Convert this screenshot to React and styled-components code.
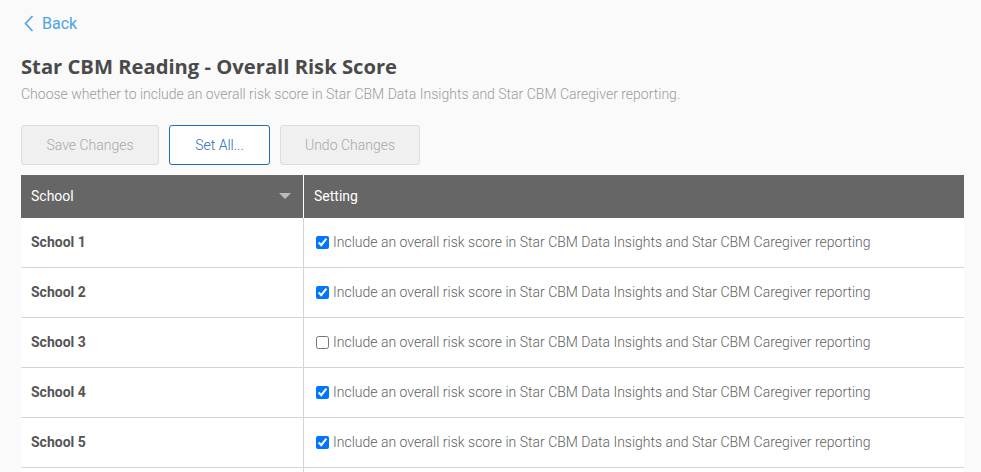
import React from 'react';
import styled, { createGlobalStyle } from 'styled-components';

const GlobalStyle = createGlobalStyle`
  body {
    margin: 0;
    background: #fafafa;
    font-family: Roboto, "Liberation Sans", sans-serif;
  }
`;

const Page = styled.div`
  padding: 12px 17px 0 21px;
`;

const BackLink = styled.a`
  display: inline-flex;
  align-items: center;
  gap: 8px;
  margin-left: 3px;
  height: 22px;
  color: #4ba3e3;
  font-size: 16px;
  text-decoration: none;
  cursor: pointer;
`;

const Title = styled.h1`
  margin: 16px 0 0;
  font-family: "Open Sans", sans-serif;
  font-size: 20.2px;
  font-weight: 700;
  line-height: 28px;
  color: #4a4a4a;
`;

const Subtitle = styled.p`
  margin: 5px 0 0;
  font-size: 14px;
  font-weight: 300;
  line-height: 18px;
  color: #9a9a9a;
`;

const Toolbar = styled.div`
  display: flex;
  gap: 10px;
  margin-top: 22px;
`;

const Button = styled.button`
  height: 40px;
  width: ${p => p.$width}px;
  border-radius: 3px;
  font-family: Roboto, sans-serif;
  font-size: 14px;
  font-weight: 300;
  border: 1px solid ${p => (p.disabled ? '#dcdcdc' : '#1f6db5')};
  background: ${p => (p.disabled ? '#f0f0f0' : '#fff')};
  color: ${p => (p.disabled ? '#a8a8a8' : '#1f6db5')};
  cursor: ${p => (p.disabled ? 'default' : 'pointer')};
`;

const Table = styled.div`
  margin-top: 10px;
  background: #fff;
`;

const Row = styled.div`
  display: grid;
  grid-template-columns: 282px 1fr;
  height: ${p => (p.$header ? 43 : 50)}px;
  background: ${p => (p.$header ? '#666' : '#fff')};
  border-bottom: ${p => (p.$header ? 'none' : '1px solid #d4d4d4')};
  box-sizing: border-box;
`;

const Cell = styled.div`
  display: flex;
  align-items: center;
  padding: 0 10px;
  font-size: 14px;
  color: ${p => (p.$header ? '#fff' : '#555')};
  font-weight: ${p => (p.$bold ? 700 : 400)};
  border-left: ${p =>
    p.$divider ? `1px solid ${p.$header ? '#fff' : '#d4d4d4'}` : 'none'};
  justify-content: ${p => (p.$spread ? 'space-between' : 'flex-start')};
`;

const SortArrow = styled.span`
  width: 0;
  height: 0;
  margin-right: 2px;
  border-left: 6px solid transparent;
  border-right: 6px solid transparent;
  border-top: 6px solid #bbb;
`;

const CheckLabel = styled.label`
  display: flex;
  align-items: center;
  gap: 4px;
  margin-left: 2px;
  color: #5f5f5f;
  font-size: 14px;
  font-weight: 300;

  input {
    margin: 0;
    width: 13px;
    height: 13px;
  }
`;

const schools = [
  { name: 'School 1', on: true },
  { name: 'School 2', on: true },
  { name: 'School 3', on: false },
  { name: 'School 4', on: true },
  { name: 'School 5', on: true },
  { name: 'School 6', on: true },
];

export default function App() {
  return (
    <>
      <GlobalStyle />
      <Page>
        <BackLink>
          <svg width="10" height="17" viewBox="0 0 10 17" fill="none">
            <path d="M8.5 1L1.5 8.5L8.5 16" stroke="#4ba3e3" strokeWidth="1.6" />
          </svg>
          Back
        </BackLink>
        <Title>Star CBM Reading - Overall Risk Score</Title>
        <Subtitle>
          Choose whether to include an overall risk score in Star CBM Data Insights and Star CBM
          Caregiver reporting.
        </Subtitle>
        <Toolbar>
          <Button $width={138} disabled>Save Changes</Button>
          <Button $width={101}>Set All...</Button>
          <Button $width={140} disabled>Undo Changes</Button>
        </Toolbar>
        <Table>
          <Row $header>
            <Cell $header $spread>
              School
              <SortArrow />
            </Cell>
            <Cell $header $divider>Setting</Cell>
          </Row>
          {schools.map(s => (
            <Row key={s.name}>
              <Cell $bold>{s.name}</Cell>
              <Cell $divider>
                <CheckLabel>
                  <input type="checkbox" defaultChecked={s.on} />
                  Include an overall risk score in Star CBM Data Insights and Star CBM Caregiver
                  reporting
                </CheckLabel>
              </Cell>
            </Row>
          ))}
        </Table>
      </Page>
    </>
  );
}
